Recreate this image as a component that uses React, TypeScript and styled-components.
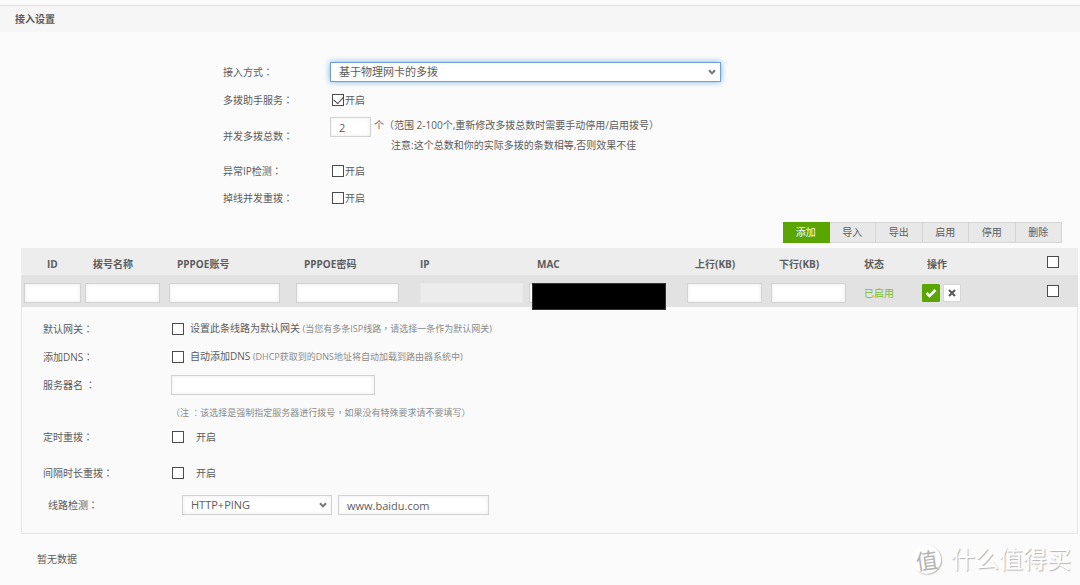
import React from "react";
import styled, { createGlobalStyle, css } from "styled-components";

const GlobalStyle = createGlobalStyle`
  * { box-sizing: border-box; }
  body {
    margin: 0;
    background: #fbfbfb;
    color: #5c5c5c;
    font: 10px/20px "Open Sans", "Noto Sans CJK SC", sans-serif;
  }
  input, select, button { font-family: inherit; color: inherit; margin: 0; }
`;

const Page = styled.main`
  padding-top: 5px;
`;

const TitleBar = styled.header`
  display: flex;
  align-items: center;
  height: 27px;
  padding: 0 15px;
  border-top: 1px solid #dfdfdf;
  background: #f6f6f6;
`;

const Title = styled.h1`
  margin: 0;
  font-size: 10px;
  font-weight: 600;
`;

const AccessForm = styled.form`
  padding: 30px 0 0 223px;
`;

const FormRow = styled.div<{ $gap: number }>`
  display: grid;
  grid-template-columns: 107px minmax(0, 1fr);
  align-items: center;
  min-height: 20px;
  margin-bottom: ${(p) => p.$gap}px;
`;

const DetailRow = styled(FormRow)`
  grid-template-columns: 128px minmax(0, 1fr);
`;

const NameLabel = styled.label<{ $indent: number }>`
  padding-left: ${(p) => p.$indent}px;
`;

/* Full-width marks that sit in the middle of their square. */
const Mark = styled.span`
  font-family: "Noto Sans CJK TC", sans-serif;
  line-height: 1;
`;

const fieldBox = css`
  height: 20px;
  padding: 0 8px;
  border: 1px solid #d2d2d2;
  border-radius: 0;
  background: #fff;
  box-shadow: inset 0 0 4px #ececec;
  font-size: 11px;
  outline: none;
`;

const Field = styled.input<{ $width: number }>`
  ${fieldBox}
  display: block;
  flex: none;
  width: ${(p) => p.$width}px;
  &:disabled {
    border-color: #e8e8e8;
    background: #ececec;
    box-shadow: none;
  }
`;

const SelectWrap = styled.div<{ $width: number }>`
  display: grid;
  align-items: center;
  width: ${(p) => p.$width}px;
  flex: none;
  & > * { grid-area: 1 / 1; }
  svg { justify-self: end; margin-right: 5px; pointer-events: none; }
`;

const Select = styled.select<{ $active?: boolean }>`
  ${fieldBox}
  width: 100%;
  appearance: none;
  line-height: 18px;
  ${(p) =>
    p.$active &&
    css`
      border-color: #6d9fd2;
      box-shadow: 0 0 6px #7fb0e0;
    `}
`;

const Tick = styled.input.attrs({ type: "checkbox" })`
  position: relative;
  display: block;
  flex: none;
  width: 12px;
  height: 12px;
  border: 1px solid #4c4c4c;
  background: #fff;
  appearance: none;
  &:checked::after {
    content: "";
    position: absolute;
    left: 1px;
    top: 1px;
    width: 8px;
    height: 5px;
    border: solid #444;
    border-width: 0 0 1px 1px;
    transform: rotate(-48deg);
  }
`;

const TickLabel = styled.label<{ $gap: number; $inset: number }>`
  display: flex;
  align-items: center;
  gap: ${(p) => p.$gap}px;
  padding-left: ${(p) => p.$inset}px;
`;

const CountControl = styled.div`
  display: flex;
  gap: 3px;
  padding-top: 1px;
  p { margin: 0; line-height: 20px; margin-top: -2px; }
  p + p { margin: 0 0 0 17px; }
`;

const Hint = styled.span`
  color: #8a8a8a;
  font-size: 9px;
`;

const Note = styled.p`
  margin: 0;
  color: #8a8a8a;
  font-size: 9px;
  grid-column: 2;
`;

const Inline = styled.div<{ $inset: number }>`
  display: flex;
  gap: 6px;
  padding-left: ${(p) => p.$inset}px;
`;

const Toolbar = styled.div`
  display: grid;
  grid-template-columns: repeat(6, 1fr);
  width: 279px;
  margin: 14px 18px 5px auto;
`;

const ToolButton = styled.button<{ $primary?: boolean }>`
  height: 21px;
  padding: 0;
  border: 1px solid #d4d4d4;
  border-left-width: 0;
  background: #e8e8e8;
  font-size: 10px;
  line-height: 19px;
  ${(p) =>
    p.$primary &&
    css`
      border-color: #5aa502;
      background: #5aa502;
      color: #fff;
    `}
`;

const Lines = styled.section`
  margin: 0 2px 0 21px;
`;

const Table = styled.table`
  width: 100%;
  table-layout: fixed;
  border-collapse: collapse;
`;

const HeadRow = styled.tr`
  height: 27px;
  background: #ededed;
`;

const EditRow = styled.tr`
  height: 32px;
  background: #e2e2e2;
`;

const Th = styled.th<{ $inset: number }>`
  padding: 4px 0 0 ${(p) => p.$inset}px;
  text-align: left;
  font-weight: 700;
`;

const Td = styled.td`
  padding: 3px 0 0 3px;
`;

const PickTd = styled.td`
  padding: 0 0 0 17px;
`;

const Masked = styled.div`
  position: relative;
`;

const Redaction = styled.div`
  position: absolute;
  left: 3px;
  top: 0;
  width: 134px;
  height: 27px;
  border: 1px solid #333;
  background: #000;
`;

const Enabled = styled.span`
  padding-left: 9px;
  color: #7cbd2c;
`;

const Actions = styled.div`
  display: flex;
  gap: 3px;
`;

const IconButton = styled.button<{ $ok?: boolean }>`
  display: flex;
  align-items: center;
  justify-content: center;
  width: 18px;
  height: 18px;
  padding: 0;
  border: 1px solid ${(p) => (p.$ok ? "#5aa502" : "#d6d6d6")};
  border-radius: 1px;
  background: ${(p) => (p.$ok ? "#5aa502" : "#fff")};
`;

const Detail = styled.div`
  padding: 11px 21px 18px;
  border: 1px solid #e6e6e6;
  border-top: 0;
  background: #fafafa;
`;

const Footer = styled.footer`
  display: flex;
  align-items: center;
  justify-content: space-between;
  height: 50px;
  padding: 0 9px 0 37px;
`;

const Watermark = styled.div`
  display: flex;
  align-items: center;
  gap: 10px;
  color: #fff;
  font-size: 24px;
  line-height: 30px;
  text-shadow: 1px 1px 1px #b4b4b4;
`;

const Seal = styled.span`
  display: flex;
  align-items: center;
  justify-content: center;
  width: 29px;
  height: 29px;
  border-radius: 50%;
  background: #fff;
  box-shadow: 1px 1px 1px #bbb;
  color: #b4b4b4;
  font-size: 22px;
  text-shadow: none;
  transform: rotate(-8deg);
`;

const Name = ({
  htmlFor,
  indent = 0,
  children,
}: {
  htmlFor: string;
  indent?: number;
  children: React.ReactNode;
}) => (
  <NameLabel htmlFor={htmlFor} $indent={indent}>
    {children}
    <Mark>：</Mark>
  </NameLabel>
);

const Chevron = () => (
  <svg width="8" height="6" viewBox="0 0 8 6" aria-hidden="true">
    <path d="M1 1.2 4 4.4 7 1.2" fill="none" stroke="#777" strokeWidth="2" />
  </svg>
);

const columns = [
  { title: "ID", width: 61, inset: 26 },
  { title: "拨号名称", width: 84, inset: 11 },
  { title: "PPPOE账号", width: 127, inset: 11 },
  { title: "PPPOE密码", width: 124, inset: 11 },
  { title: "IP", width: 109, inset: 3 },
  { title: "MAC", width: 158, inset: 11 },
  { title: "上行(KB)", width: 84, inset: 11 },
  { title: "下行(KB)", width: 84, inset: 11 },
  { title: "状态", width: 67, inset: 12 },
  { title: "操作", width: 111, inset: 8 },
];

export default function App() {
  return (
    <Page>
      <GlobalStyle />
      <TitleBar>
        <Title>接入设置</Title>
      </TitleBar>

      <AccessForm>
        <FormRow $gap={8}>
          <Name htmlFor="mode">接入方式</Name>
          <SelectWrap $width={391}>
            <Select id="mode" $active>
              <option>基于物理网卡的多拨</option>
            </Select>
            <Chevron />
          </SelectWrap>
        </FormRow>
        <FormRow $gap={6}>
          <Name htmlFor="helper">多拨助手服务</Name>
          <TickLabel $gap={1} $inset={2}>
            <Tick id="helper" defaultChecked />
            开启
          </TickLabel>
        </FormRow>
        <FormRow $gap={6}>
          <Name htmlFor="count">并发多拨总数</Name>
          <CountControl>
            <Field id="count" $width={41} defaultValue="2" />
            <div>
              <p>个（范围 2-100个,重新修改多拨总数时需要手动停用/启用拨号）</p>
              <p>注意:这个总数和你的实际多拨的条数相等,否则效果不佳</p>
            </div>
          </CountControl>
        </FormRow>
        <FormRow $gap={7}>
          <Name htmlFor="ipcheck">异常IP检测</Name>
          <TickLabel $gap={1} $inset={2}>
            <Tick id="ipcheck" />
            开启
          </TickLabel>
        </FormRow>
        <FormRow $gap={0}>
          <Name htmlFor="redial">掉线并发重拨</Name>
          <TickLabel $gap={1} $inset={2}>
            <Tick id="redial" />
            开启
          </TickLabel>
        </FormRow>
      </AccessForm>

      <Toolbar>
        <ToolButton $primary>添加</ToolButton>
        {["导入", "导出", "启用", "停用", "删除"].map((t) => (
          <ToolButton key={t}>{t}</ToolButton>
        ))}
      </Toolbar>

      <Lines>
        <Table>
          <colgroup>
            {columns.map((c) => (
              <col key={c.title} style={{ width: c.width }} />
            ))}
            <col style={{ width: 48 }} />
          </colgroup>
          <thead>
            <HeadRow>
              {columns.map((c) => (
                <Th key={c.title} $inset={c.inset}>
                  {c.title}
                </Th>
              ))}
              <PickTd as="th">
                <Tick aria-label="全选" />
              </PickTd>
            </HeadRow>
          </thead>
          <tbody>
            <EditRow>
              <Td><Field aria-label="ID" $width={57} /></Td>
              <Td><Field aria-label="拨号名称" $width={75} /></Td>
              <Td><Field aria-label="PPPOE账号" $width={111} /></Td>
              <Td><Field aria-label="PPPOE密码" $width={103} /></Td>
              <Td><Field aria-label="IP" $width={103} disabled /></Td>
              <Td>
                <Masked>
                  <Field aria-label="MAC" $width={137} />
                  <Redaction />
                </Masked>
              </Td>
              <Td><Field aria-label="上行" $width={75} /></Td>
              <Td><Field aria-label="下行" $width={75} /></Td>
              <Td><Enabled>已启用</Enabled></Td>
              <Td>
                <Actions>
                  <IconButton $ok aria-label="确定">
                    <svg width="12" height="10" viewBox="0 0 12 10">
                      <path d="M1.5 5 4.5 8 10.5 2" fill="none" stroke="#fff" strokeWidth="2.6" />
                    </svg>
                  </IconButton>
                  <IconButton aria-label="取消">
                    <svg width="8" height="8" viewBox="0 0 8 8">
                      <path d="M1 1 7 7M7 1 1 7" fill="none" stroke="#5c5c5c" strokeWidth="2.2" />
                    </svg>
                  </IconButton>
                </Actions>
              </Td>
              <PickTd>
                <Tick aria-label="选择" />
              </PickTd>
            </EditRow>
          </tbody>
        </Table>

        <Detail>
          <DetailRow $gap={7}>
            <Name htmlFor="gateway">默认网关</Name>
            <TickLabel $gap={6} $inset={1}>
              <Tick id="gateway" />
              <span>
                设置此条线路为默认网关{" "}
                <Hint>(当您有多条ISP线路<Mark>，</Mark>请选择一条作为默认网关)</Hint>
              </span>
            </TickLabel>
          </DetailRow>
          <DetailRow $gap={8}>
            <Name htmlFor="dns">添加DNS</Name>
            <TickLabel $gap={6} $inset={1}>
              <Tick id="dns" />
              <span>
                自动添加DNS <Hint>(DHCP获取到的DNS地址将自动加载到路由器系统中)</Hint>
              </span>
            </TickLabel>
          </DetailRow>
          <DetailRow $gap={8}>
            <Name htmlFor="server">服务器名 </Name>
            <Field id="server" $width={204} />
          </DetailRow>
          <DetailRow $gap={4}>
            <Note>
              （注 <Mark>：</Mark>该选择是强制指定服务器进行拨号<Mark>，</Mark>如果没有特殊要求请不要填写）
            </Note>
          </DetailRow>
          <DetailRow $gap={16}>
            <Name htmlFor="timed">定时重拨</Name>
            <TickLabel $gap={12} $inset={1}>
              <Tick id="timed" />
              开启
            </TickLabel>
          </DetailRow>
          <DetailRow $gap={12}>
            <Name htmlFor="interval">间隔时长重拨</Name>
            <TickLabel $gap={12} $inset={1}>
              <Tick id="interval" />
              开启
            </TickLabel>
          </DetailRow>
          <DetailRow $gap={0}>
            <Name htmlFor="probe" indent={5}>线路检测</Name>
            <Inline $inset={11}>
              <SelectWrap $width={150}>
                <Select id="probe">
                  <option>HTTP+PING</option>
                </Select>
                <Chevron />
              </SelectWrap>
              <Field aria-label="检测地址" $width={151} defaultValue="www.baidu.com" />
            </Inline>
          </DetailRow>
        </Detail>
      </Lines>

      <Footer>
        <span>暂无数据</span>
        <Watermark>
          <Seal>值</Seal>
          什么值得买
        </Watermark>
      </Footer>
    </Page>
  );
}
